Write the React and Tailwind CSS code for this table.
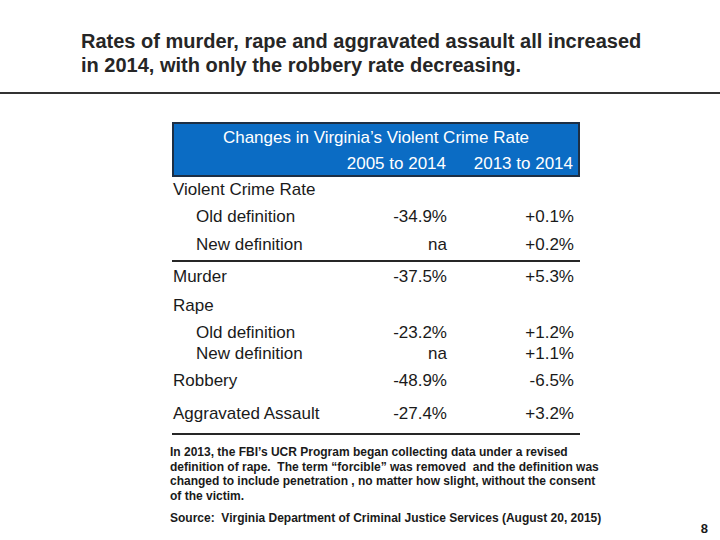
import React from "react";

const rows = [
    { label: "Violent Crime Rate", h: "h-[26px]" },
    { label: "Old definition", a: "-34.9%", b: "+0.1%", indent: true, h: "h-[28px]" },
    { label: "New definition", a: "na", b: "+0.2%", indent: true, h: "h-[28px]", rule: true },
    { label: "Murder", a: "-37.5%", b: "+5.3%", h: "h-[30px]" },
    { label: "Rape", h: "h-[28px]" },
    { label: "Old definition", a: "-23.2%", b: "+1.2%", indent: true, h: "h-[21px]" },
    { label: "New definition", a: "na", b: "+1.1%", indent: true, h: "h-[21px]" },
    { label: "Robbery", a: "-48.9%", b: "-6.5%", h: "h-[38px]" },
    { label: "Aggravated Assault", a: "-27.4%", b: "+3.2%", h: "h-[28px]" },
];

function Row({ row }) {
    return (
        <>
            <div className={`grid grid-cols-[174px_100px_127px] items-center whitespace-nowrap ${row.h}`}>
                <div className={row.indent ? "pl-[23px]" : ""}>{row.label}</div>
                <div className="text-right">{row.a}</div>
                <div className="text-right">{row.b}</div>
            </div>
            {row.rule && <div className="h-[2px] bg-[#262626] w-[408px] -ml-px mt-[1px]" />}
        </>
    );
}

export default function App() {
    return (
        <div className="w-[720px] h-[540px] bg-white text-[#1a1a1a] font-['Liberation_Sans',Arial,sans-serif] overflow-hidden">
            <div className="pt-[29px] pl-[81px] h-[92px]">
                <h1 className="text-[20px] leading-[24px] font-bold text-[#262626] whitespace-nowrap">
                    Rates of murder, rape and aggravated assault all increased
                    <br />
                    in 2014, with only the robbery rate decreasing.
                </h1>
            </div>
            <div className="h-[2px] bg-[#333]" />

            <div className="ml-[172px] mt-[28px] w-[408px] text-[17px]">
                <div className="h-[55px] bg-[#0b6cc4] border-2 border-[#1d2f45] text-white flex flex-col">
                    <div className="h-[27px] flex items-center justify-center pt-[1px] whitespace-nowrap">
                        Changes in Virginia’s Violent Crime Rate
                    </div>
                    <div className="grid grid-cols-[172px_100px_127px] h-[24px] items-center whitespace-nowrap">
                        <div />
                        <div className="text-right">2005 to 2014</div>
                        <div className="text-right">2013 to 2014</div>
                    </div>
                </div>
                <div className="pl-px">
                    {rows.map((r, i) => (
                        <Row key={i} row={r} />
                    ))}
                </div>
                <div className="h-[2px] bg-[#262626] mt-[5px]" />
            </div>

            <div className="ml-[170px] mt-[10px] text-[12px] font-bold leading-[14.7px] tracking-[0px] text-[#1a1a1a] whitespace-nowrap">
                <p>
                    In 2013, the FBI’s UCR Program began collecting data under a revised
                    <br />
                    definition of rape.&nbsp; The term “forcible” was removed&nbsp; and the definition was
                    <br />
                    changed to include penetration , no matter how slight, without the consent
                    <br />
                    of the victim.
                </p>
                <p className="mt-[7px]">
                    Source:&nbsp; Virginia Department of Criminal Justice Services (August 20, 2015)
                </p>
            </div>
            <div className="flex justify-end pr-[12px] -mt-[4px] text-[13px] font-bold leading-[14px]">8</div>
        </div>
    );
}
